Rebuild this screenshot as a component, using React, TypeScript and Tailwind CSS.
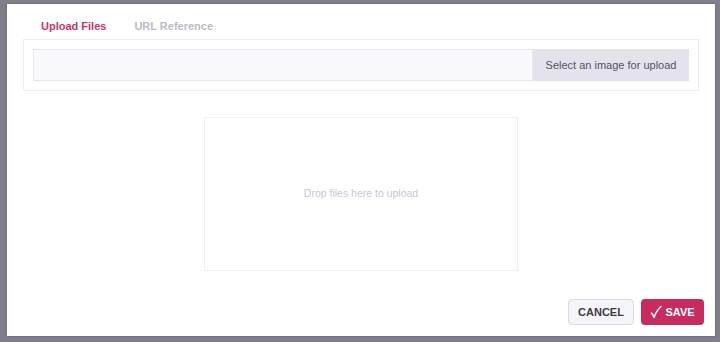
import React from "react";

export default function App() {
  return (
    <div
      className="w-[720px] h-[342px] bg-[#807f89] overflow-hidden pt-[4px] pl-[7px]"
      style={{ fontFamily: '"Liberation Sans", Arial, sans-serif' }}
    >
      <div className="w-[708px] h-[332px] bg-white flex flex-col px-4 shadow-[0_0_2px_rgba(0,0,0,0.3)]">
        <div className="h-[35px] pt-[10px] flex items-center gap-[28px] pl-[18px] text-[11px] font-bold">
          <span className="text-[#c9346c]">Upload Files</span>
          <span className="text-[#bbbac6]">URL Reference</span>
        </div>
        <div className="h-[52px] border border-[#ececf2] p-[9px] flex">
          <div className="flex-1 bg-[#f9f9fd] border border-[#e6e6f0]"></div>
          <div className="w-[156px] bg-[#e3e2ed] text-[#55545e] text-[11px] flex items-center justify-center">
            Select an image for upload
          </div>
        </div>
        <div className="flex justify-center mt-[26px]">
          <div className="w-[314px] h-[154px] border border-[#efeff4] flex items-center justify-center text-[10.5px] text-[#c6c6d6]">
            Drop files here to upload
          </div>
        </div>
        <div className="flex justify-end gap-[7px] mt-[28px] -mr-[5px]">
          <button className="w-[66px] h-[26px] rounded-[4px] bg-[#f5f5fa] border border-[#d9d9e4] text-[11px] font-bold text-[#3c3b44] flex items-center justify-center">
            CANCEL
          </button>
          <button className="w-[63px] h-[26px] rounded-[4px] bg-[#c92a60] text-[11px] font-bold text-white flex items-center justify-center gap-[3px]">
            <svg width="12" height="14" viewBox="0 0 12 14" fill="none">
              <path d="M1.5 8 Q3 9.5 4 12.5 Q6.5 5.5 11 1.5" stroke="white" strokeWidth="1.5" strokeLinecap="round" strokeLinejoin="round" />
            </svg>
            SAVE
          </button>
        </div>
      </div>
    </div>
  );
}
